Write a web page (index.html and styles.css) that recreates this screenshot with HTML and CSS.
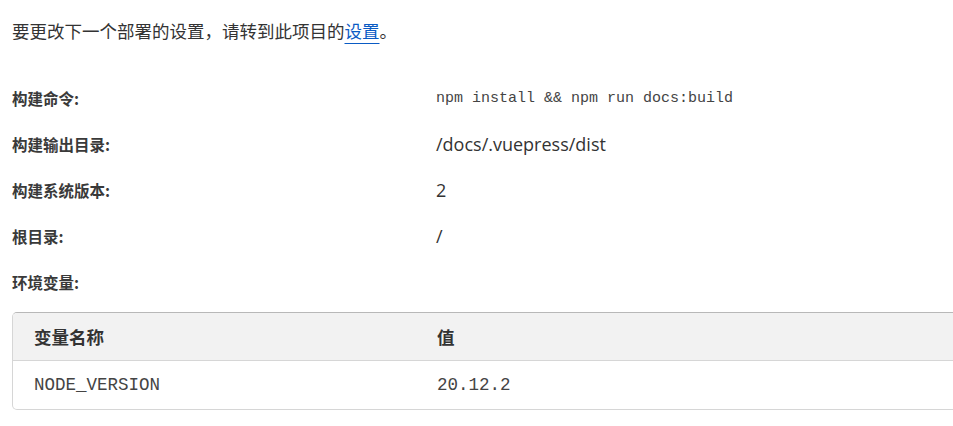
FILE: index.html
```html
<!DOCTYPE html>
<html lang="zh-CN">
<head>
<meta charset="utf-8">
<title>部署设置</title>
<link rel="stylesheet" href="styles.css">
</head>
<body>
<main class="page">
  <p class="intro">要更改下一个部署的设置，请转到此项目的<a class="link" href="#">设置</a>。</p>
  <dl class="settings">
    <div class="row">
      <dt class="label">构建命令:</dt>
      <dd class="value mono">npm install &amp;&amp; npm run docs:build</dd>
    </div>
    <div class="row">
      <dt class="label">构建输出目录:</dt>
      <dd class="value">/docs/.vuepress/dist</dd>
    </div>
    <div class="row">
      <dt class="label">构建系统版本:</dt>
      <dd class="value">2</dd>
    </div>
    <div class="row">
      <dt class="label">根目录:</dt>
      <dd class="value">/</dd>
    </div>
    <div class="row">
      <dt class="label">环境变量:</dt>
      <dd class="value"></dd>
    </div>
  </dl>
  <table class="env">
    <thead>
      <tr><th class="c1">变量名称</th><th class="c2">值</th></tr>
    </thead>
    <tbody>
      <tr><td class="c1 mono-cell">NODE_VERSION</td><td class="c2 mono-cell">20.12.2</td></tr>
    </tbody>
  </table>
</main>
</body>
</html>
```
FILE: styles.css
```css
html, body {
  margin: 0;
  padding: 0;
  overflow: hidden;
  background: #ffffff;
}
body {
  font-family: "Open Sans", "Noto Sans CJK SC", sans-serif;
  color: #333333;
}
.page {
  padding: 18px 0 0 12px;
}
.intro {
  margin: 0;
  font-family: "Noto Sans CJK SC", sans-serif;
  font-size: 17.5px;
  line-height: 26px;
  color: #333333;
}
.link {
  color: #0a5bc4;
  text-decoration: underline;
  text-underline-offset: 5px;
  text-decoration-thickness: 1px;
}
.settings {
  margin: 31px 0 0 0;
  display: flex;
  flex-direction: column;
}
.row {
  display: grid;
  grid-template-columns: 424px 1fr;
  align-items: center;
  height: 46px;
}
.label {
  margin: 0;
  font-family: "Noto Sans CJK SC", sans-serif;
  font-weight: 700;
  font-size: 15.5px;
  color: #3a3a3a;
}
.value {
  margin: 0;
  font-family: "Open Sans", sans-serif;
  font-size: 18px;
  color: #333333;
}
.value.mono {
  font-family: "Liberation Mono", monospace;
  font-size: 15px;
  color: #444444;
}
.env {
  margin-top: 7px;
  width: 1000px;
  border-collapse: separate;
  border-spacing: 0;
  border: 1px solid #d6d6d6;
  border-top-color: #b8b8b8;
  border-radius: 5px;
  overflow: hidden;
}
.env th {
  background: #f2f2f2;
  height: 47px;
  text-align: left;
  font-family: "Noto Sans CJK SC", sans-serif;
  font-weight: 700;
  font-size: 17.5px;
  color: #333333;
  border-bottom: 1px solid #d6d6d6;
  padding: 0;
}
.env td {
  height: 48px;
  padding: 0;
}
.env .c1 {
  width: 403px;
  padding-left: 21px;
}
.mono-cell {
  font-family: "Liberation Mono", monospace;
  font-size: 17.5px;
  color: #444444;
}
```
